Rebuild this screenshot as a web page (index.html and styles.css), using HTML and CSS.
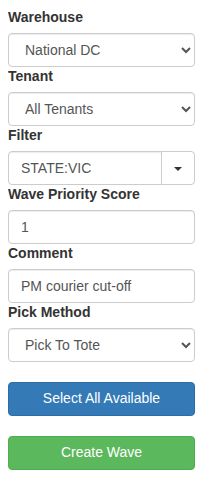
FILE: index.html
```html
<!DOCTYPE html>
<html>
  <head>
    <link rel="stylesheet" href="styles.css">
  </head>
  <body>
    <form class="wave-form">
      <div class="form-group">
        <label>Warehouse</label>
        <select class="form-control">
          <option>National DC</option>
        </select>
      </div>
      <div class="form-group">
        <label>Tenant</label>
        <select class="form-control">
          <option>All Tenants</option>
        </select>
      </div>
      <div class="form-group">
        <label>Filter</label>
        <div class="input-group">
          <input class="form-control" type="text" value="STATE:VIC">
          <button type="button" class="dropdown-toggle"><span class="caret"></span></button>
        </div>
      </div>
      <div class="form-group">
        <label>Wave Priority Score</label>
        <input class="form-control" type="text" value="1">
      </div>
      <div class="form-group">
        <label>Comment</label>
        <input class="form-control" type="text" value="PM courier cut-off">
      </div>
      <div class="form-group">
        <label>Pick Method</label>
        <select class="form-control">
          <option>Pick To Tote</option>
        </select>
      </div>
      <div class="actions">
        <button type="button" class="btn btn-primary">Select All Available</button>
        <button type="button" class="btn btn-success">Create Wave</button>
      </div>
    </form>
  </body>
</html>
```

FILE: styles.css
```css
* {
  box-sizing: border-box;
}
body {
  margin: 8px;
  font-family: "Liberation Sans", Arial, sans-serif;
  font-size: 14px;
  line-height: 1.42857;
  color: #333;
  background: #fff;
}
.form-group label {
  display: block;
  font-weight: bold;
  margin-bottom: 5px;
}
.form-control {
  display: block;
  width: 100%;
  height: 34px;
  padding: 6px 12px;
  font-family: inherit;
  font-size: 14px;
  line-height: 1.42857;
  color: #555;
  background: #fff;
  border: 1px solid #ccc;
  border-radius: 4px;
  box-shadow: inset 0 1px 1px rgba(0, 0, 0, 0.075);
}
.input-group {
  display: flex;
}
.input-group .form-control {
  flex: 1;
  min-width: 0;
  border-radius: 4px 0 0 4px;
}
.dropdown-toggle {
  flex: none;
  width: 34px;
  height: 34px;
  margin-left: -1px;
  background: #fff;
  border: 1px solid #ccc;
  border-radius: 0 4px 4px 0;
  padding: 0;
}
.caret {
  display: inline-block;
  width: 0;
  height: 0;
  border-top: 4px solid #333;
  border-left: 4px solid transparent;
  border-right: 4px solid transparent;
  vertical-align: middle;
}
.actions {
  margin-top: 20px;
}
.btn {
  display: block;
  width: 100%;
  height: 34px;
  padding: 6px 12px;
  font-family: inherit;
  font-size: 14px;
  line-height: 1.42857;
  color: #fff;
  border: 1px solid transparent;
  border-radius: 4px;
  cursor: pointer;
}
.actions .btn + .btn {
  margin-top: 20px;
}
.btn-primary {
  background: #337ab7;
  border-color: #2e6da4;
}
.btn-success {
  background: #5cb85c;
  border-color: #4cae4c;
}
```
